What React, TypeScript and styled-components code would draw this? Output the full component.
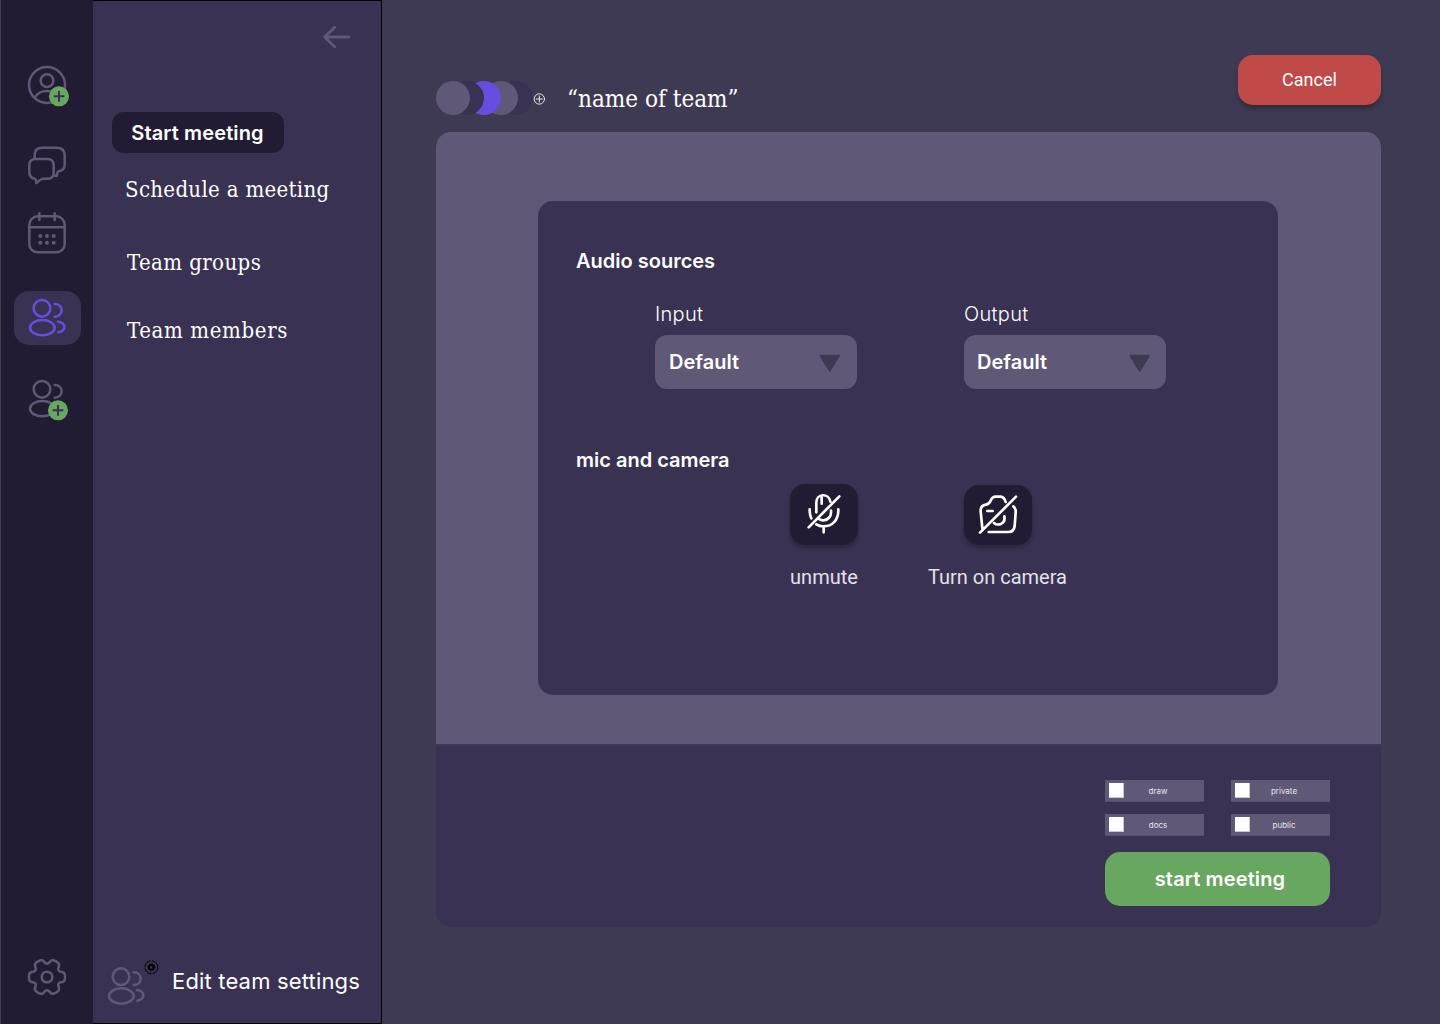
import React from "react";
import styled, { createGlobalStyle } from "styled-components";

const color = {
  page: "#3f3a53",
  rail: "#211c33",
  panel: "#393252",
  muted: "#5f5876",
  accent: "#6b4ce0",
  green: "#68a75f",
  red: "#bf4a48",
};
const sans = `Inter, "Liberation Sans", sans-serif`;
const roboto = `Roboto, "Liberation Sans", sans-serif`;
const slab = `"Roboto Slab", "DejaVu Serif Condensed", "DejaVu Serif", serif`;

const Global = createGlobalStyle`
  *, *::before, *::after { box-sizing: border-box; }
  body { margin: 0; background: ${color.page}; color: #fff; font-family: ${sans}; }
  button { border: 0; padding: 0; margin: 0; background: none; color: inherit; font: inherit; }
  svg { display: block; overflow: visible; flex: none; }
`;

const Screen = styled.div`
  display: flex;
  width: 1440px;
  height: 1024px;
  overflow: hidden;
  background: ${color.page};
`;

const Rail = styled.nav`
  display: flex;
  flex-direction: column;
  align-items: center;
  width: 93px;
  padding: 64px 0 22px 1px;
  border-left: 1px solid ${color.page};
  background: ${color.rail};
`;

const RailButton = styled.button<{ $gap?: number; $active?: boolean }>`
  display: grid;
  place-items: center;
  flex: none;
  width: 67px;
  height: 54px;
  margin-top: ${(p) => p.$gap ?? 0}px;
  border-radius: 15px;
  background: ${(p) => (p.$active ? color.panel : "transparent")};
`;

const RailSpacer = styled.div`
  flex: 1;
`;

const Side = styled.aside`
  display: flex;
  flex-direction: column;
  align-items: flex-start;
  width: 289px;
  padding: 24px 0 17px 14px;
  border: 1px solid #000;
  border-left: 0;
  background: ${color.panel};
`;

const BackButton = styled.button`
  align-self: flex-end;
  height: 24px;
  margin-right: 30px;
`;

const ActiveLink = styled.button`
  width: 172px;
  height: 41px;
  margin: 63px 0 0 5px;
  padding-right: 1px;
  border-radius: 12px;
  background: ${color.rail};
  font: 600 20px/43px ${sans};
  letter-spacing: 0.12px;
`;

const SideLink = styled.button<{ $top: number; $indent: number; $track: number }>`
  margin: ${(p) => p.$top}px 0 0 ${(p) => p.$indent}px;
  font: 400 22px/30px ${slab};
  letter-spacing: ${(p) => p.$track}px;
  white-space: nowrap;
`;

const SideFooter = styled.div`
  display: flex;
  align-items: center;
  gap: 13px;
  margin-top: auto;
  font: 400 22px/28px ${sans};
  white-space: nowrap;
`;

const FooterLabel = styled.span`
  margin-bottom: 4px;
  letter-spacing: 0.17px;
`;

const Main = styled.main`
  flex: 1;
  padding: 55px 59px 0 54px;
`;

const Header = styled.header`
  display: flex;
  align-items: flex-start;
  height: 77px;
`;

const Team = styled.div`
  display: flex;
  align-items: center;
  height: 34px;
  margin-top: 26px;
`;

const Avatars = styled.div`
  display: flex;
  isolation: isolate;
`;

const Avatar = styled.span<{ $fill: string; $order: number; $overlap: number }>`
  position: relative;
  z-index: ${(p) => p.$order};
  width: 34px;
  height: 34px;
  margin-left: -${(p) => p.$overlap}px;
  border-radius: 50%;
  background: ${(p) => p.$fill};
`;

const AddMember = styled.button`
  margin: 2px 22px 0 0;
`;

const TeamName = styled.h1`
  margin: 1px 0 0;
  font: 400 24px/32px ${slab};
  white-space: nowrap;
`;

const Cancel = styled.button`
  width: 143px;
  height: 50px;
  margin-left: auto;
  border-radius: 15px;
  background: ${color.red};
  box-shadow: 0 4px 4px rgba(0, 0, 0, 0.25);
  font: 400 18px/50px ${roboto};
`;

const Card = styled.section`
  display: flex;
  flex-direction: column;
  height: 795px;
  border-radius: 15px;
  overflow: hidden;
  background: ${color.panel};
`;

const Stage = styled.div`
  height: 614px;
  padding: 69px 103px 0 102px;
  border-bottom: 2px solid ${color.page};
  background: ${color.muted};
`;

const Settings = styled.div`
  height: 494px;
  padding: 46px 38px 0;
  border-radius: 15px;
  background: ${color.panel};
`;

const Heading = styled.h2<{ $top?: number }>`
  margin: ${(p) => p.$top ?? 0}px 0 0;
  font: 600 20px/28px ${sans};
`;

const Sources = styled.div`
  display: flex;
  gap: 107px;
  margin: 25px 0 0 79px;
`;

const Source = styled.label`
  display: flex;
  flex-direction: column;
  width: 202px;
  font: 300 20px/28px ${sans};
  letter-spacing: 0.3px;
`;

const Select = styled.button<{ $left: number; $right: number }>`
  display: flex;
  align-items: center;
  justify-content: space-between;
  height: 54px;
  margin-top: 7px;
  padding: 0 ${(p) => p.$right}px 0 ${(p) => p.$left}px;
  border-radius: 12px;
  background: ${color.muted};
  font: 600 20px/54px ${sans};
  letter-spacing: 0;
`;

const Devices = styled.div`
  display: flex;
  gap: 70px;
  margin: 10px 0 0 214px;
`;

const Device = styled.div`
  display: flex;
  flex-direction: column;
  align-items: center;
  color: #e6e0e9;
  font: 400 20px/26px ${roboto};
  white-space: nowrap;
`;

const DeviceButton = styled.button<{ $drop?: number }>`
  display: grid;
  place-items: center;
  width: 68px;
  height: ${(p) => 61 - (p.$drop ?? 0)}px;
  margin: ${(p) => p.$drop ?? 0}px 0 19px ${(p) => p.$drop ?? 0}px;
  border-radius: 15px;
  background: ${color.rail};
  box-shadow: 0 3px 4px rgba(0, 0, 0, 0.25);
`;

const CardFooter = styled.footer`
  display: flex;
  flex-direction: column;
  align-items: flex-end;
  padding: 34px 51px 0 0;
`;

const Options = styled.div`
  display: grid;
  grid-template-columns: 99px 99px;
  gap: 12px 27px;
`;

const Option = styled.label`
  display: flex;
  align-items: center;
  height: 22px;
  padding: 0 12px 0 4px;
  border-bottom: 1px solid #554e6d;
  background: ${color.muted};
  font: 400 8px/12px ${sans};
`;

const Box = styled.span`
  width: 15px;
  height: 15px;
  background: #fff;
  box-shadow: inset -1px -1px 0 #c9c6d2;
`;

const OptionText = styled.span`
  flex: 1;
  padding-top: 1px;
  color: #e9e6ef;
  text-align: center;
`;

const Start = styled.button`
  width: 225px;
  height: 54px;
  margin-top: 16px;
  padding-left: 5px;
  border-radius: 15px;
  background: ${color.green};
  font: 600 20px/54px ${sans};
  letter-spacing: 0.14px;
`;

/* Icons are drawn on a grid of three units per pixel. */
type IconProps = {
  box: [number, number, number, number];
  stroke?: string;
  weight?: number;
  children: React.ReactNode;
};
function Icon({ box, stroke = color.muted, weight = 7.5, children }: IconProps) {
  return (
    <svg
      width={box[2] / 3}
      height={box[3] / 3}
      viewBox={box.join(" ")}
      fill="none"
      stroke={stroke}
      strokeWidth={weight}
      strokeLinecap="round"
      strokeLinejoin="round"
    >
      {children}
    </svg>
  );
}

function Badge({ x, y }: { x: number; y: number }) {
  return (
    <g>
      <circle cx={x} cy={y} r={30} fill={color.green} stroke="none" />
      <path
        d={`M${x - 16} ${y}h32M${x} ${y - 16}v32`}
        stroke={color.panel}
        strokeWidth={6}
        strokeLinecap="butt"
      />
    </g>
  );
}

const People = () => (
  <>
    <circle cx={125} cy={114} r={25} />
    <ellipse cx={126} cy={172} rx={37} ry={23} />
    <path d="M163 101C175 101 184 109 184 120S175 139 163 139" />
    <path d="M173 154C185 155 192 162 192 170S185 184 174 186" />
  </>
);

function cogPath(cx: number, cy: number, low: number, high: number) {
  const steps = 180;
  const points = Array.from({ length: steps }, (_, i) => {
    const t = (i / steps) * Math.PI * 2;
    const wave = Math.tanh(1.8 * (Math.cos(6 * t) + 0.45));
    const r = low + ((high - low) * (wave + 0.76)) / 1.75;
    return `${(cx + r * Math.cos(t)).toFixed(1)} ${(cy + r * Math.sin(t)).toFixed(1)}`;
  });
  return `M${points.join("L")}Z`;
}

const Caret = () => (
  <svg width="22" height="20" viewBox="0 0 22 20">
    <path
      d="M1.2 3.5H20.2L10.7 19Z"
      fill={color.page}
      stroke={color.page}
      strokeWidth="1.6"
      strokeLinejoin="round"
    />
  </svg>
);

export default function App() {
  return (
    <Screen>
      <Global />
      <Rail>
        <RailButton aria-label="Profile">
          <Icon box={[60, 42, 165, 162]}>
            <circle cx={141} cy={105} r={54} />
            <circle cx={141} cy={92} r={19} />
            <path d="M105 141C114 128 126 123 141 123S168 128 177 141" />
            <Badge x={177} y={139} />
          </Icon>
        </RailButton>
        <RailButton $gap={20} aria-label="Chats">
          <Icon box={[60, 264, 165, 162]}>
            <path d="M104 325V315Q104 293 126 293H170Q194 293 194 317V343Q194 362 175 364Q171 366 171 377Q166 378 162 376" />
            <path d="M107 327H142Q161 327 161 346V369Q161 386 143 386H129Q119 389 109 399Q109 391 106 387Q88 384 88 367V346Q88 327 107 327Z" />
          </Icon>
        </RailButton>
        <RailButton $gap={14} aria-label="Calendar">
          <Icon box={[60, 468, 165, 162]}>
            <rect x={88} y={499} width={106} height={108} rx={25} />
            <path d="M88 532H194M118 490V510M164 490V510" />
            <g fill={color.muted} stroke="none">
              {[558, 578].map((y) =>
                [121, 141, 161].map((x) => <circle key={x + y} cx={x} cy={y} r={6} />),
              )}
            </g>
          </Icon>
        </RailButton>
        <RailButton $gap={31} $active aria-label="Teams">
          <Icon box={[59, 62, 165, 162]} stroke={color.accent}>
            <People />
          </Icon>
        </RailButton>
        <RailButton $gap={27} aria-label="Add team">
          <Icon box={[59, 62, 165, 162]}>
            <People />
            <Badge x={173} y={177} />
          </Icon>
        </RailButton>
        <RailSpacer />
        <RailButton aria-label="Preferences">
          <Icon box={[60, 24, 165, 162]}>
            <path d={cogPath(141, 111, 40, 54)} />
            <circle cx={141} cy={111} r={16} />
          </Icon>
        </RailButton>
      </Rail>

      <Side>
        <BackButton aria-label="Back">
          <Icon box={[700, 75, 84, 72]} weight={8.5}>
            <path d="M778 111H705M735 82L705 111L735 140" />
          </Icon>
        </BackButton>
        <ActiveLink>Start meeting</ActiveLink>
        <SideLink $top={22} $indent={18} $track={0.32}>Schedule a meeting</SideLink>
        <SideLink $top={43} $indent={20} $track={0.42}>Team groups</SideLink>
        <SideLink $top={38} $indent={20} $track={0.65}>Team members</SideLink>
        <SideFooter>
          <Icon box={[320, 57, 156, 138]}>
            <g transform="translate(237 -7)">
              <People />
            </g>
            <g stroke="#000" strokeWidth={3}>
              <circle cx={453} cy={79} r={19.5} strokeDasharray="24 6.63" />
              <circle cx={453} cy={79} r={7} strokeWidth={6} />
              <circle cx={453} cy={79} r={11} strokeDasharray="4 4.64" strokeLinecap="butt" />
            </g>
          </Icon>
          <FooterLabel>Edit team settings</FooterLabel>
        </SideFooter>
      </Side>

      <Main>
        <Header>
          <Team>
            <Avatars>
              <Avatar $fill={color.muted} $order={5} $overlap={0} />
              <Avatar $fill={color.panel} $order={4} $overlap={20} />
              <Avatar $fill={color.accent} $order={3} $overlap={17} />
              <Avatar $fill={color.muted} $order={2} $overlap={17} />
              <Avatar $fill={color.panel} $order={1} $overlap={19} />
            </Avatars>
            <AddMember aria-label="Add member">
              <Icon box={[324, 100, 36, 36]} stroke="#e9e6ef" weight={3}>
                <circle cx={343} cy={118} r={15.5} />
                <path d="M334 118h18M343 109v18" />
              </Icon>
            </AddMember>
            <TeamName>“name of team”</TeamName>
          </Team>
          <Cancel>Cancel</Cancel>
        </Header>

        <Card>
          <Stage>
            <Settings>
              <Heading>Audio sources</Heading>
              <Sources>
                <Source>
                  Input
                  <Select $left={14} $right={16}>
                    Default <Caret />
                  </Select>
                </Source>
                <Source>
                  Output
                  <Select $left={13} $right={15}>
                    Default <Caret />
                  </Select>
                </Source>
              </Sources>
              <Heading $top={57}>mic and camera</Heading>
              <Devices>
                <Device>
                  <DeviceButton aria-label="Unmute">
                    <Icon box={[138, 74, 108, 120]} stroke="#fff" weight={8}>
                      <path d="M169 126V97C169 68 207 68 211 94M185 81V100M146 171L238 78M149 117C149 130 150 137 154 144M235 117C236 151 215 168 191 168C182 168 175 166 169 162M213 121C215 139 203 150 190 150C185 150 181 149 177 146M191 169V186" />
                    </Icon>
                  </DeviceButton>
                  unmute
                </Device>
                <Device>
                  <DeviceButton $drop={1} aria-label="Turn on camera">
                    <Icon box={[657, 73, 114, 120]} stroke="#fff" weight={8}>
                      <path d="M660 186L768 78M667 172L662 122Q661 104 678 102Q687 101 692 90Q697 78 707 78H721Q733 79 737 94M760 107Q768 113 767 125L764 166Q762 184 745 184H686M682 121H698M733 137Q736 153 724 159Q711 165 702 157" />
                    </Icon>
                  </DeviceButton>
                  Turn on camera
                </Device>
              </Devices>
            </Settings>
          </Stage>
          <CardFooter>
            <Options>
              {["draw", "private", "docs", "public"].map((name) => (
                <Option key={name}>
                  <Box />
                  <OptionText>{name}</OptionText>
                </Option>
              ))}
            </Options>
            <Start>start meeting</Start>
          </CardFooter>
        </Card>
      </Main>
    </Screen>
  );
}
